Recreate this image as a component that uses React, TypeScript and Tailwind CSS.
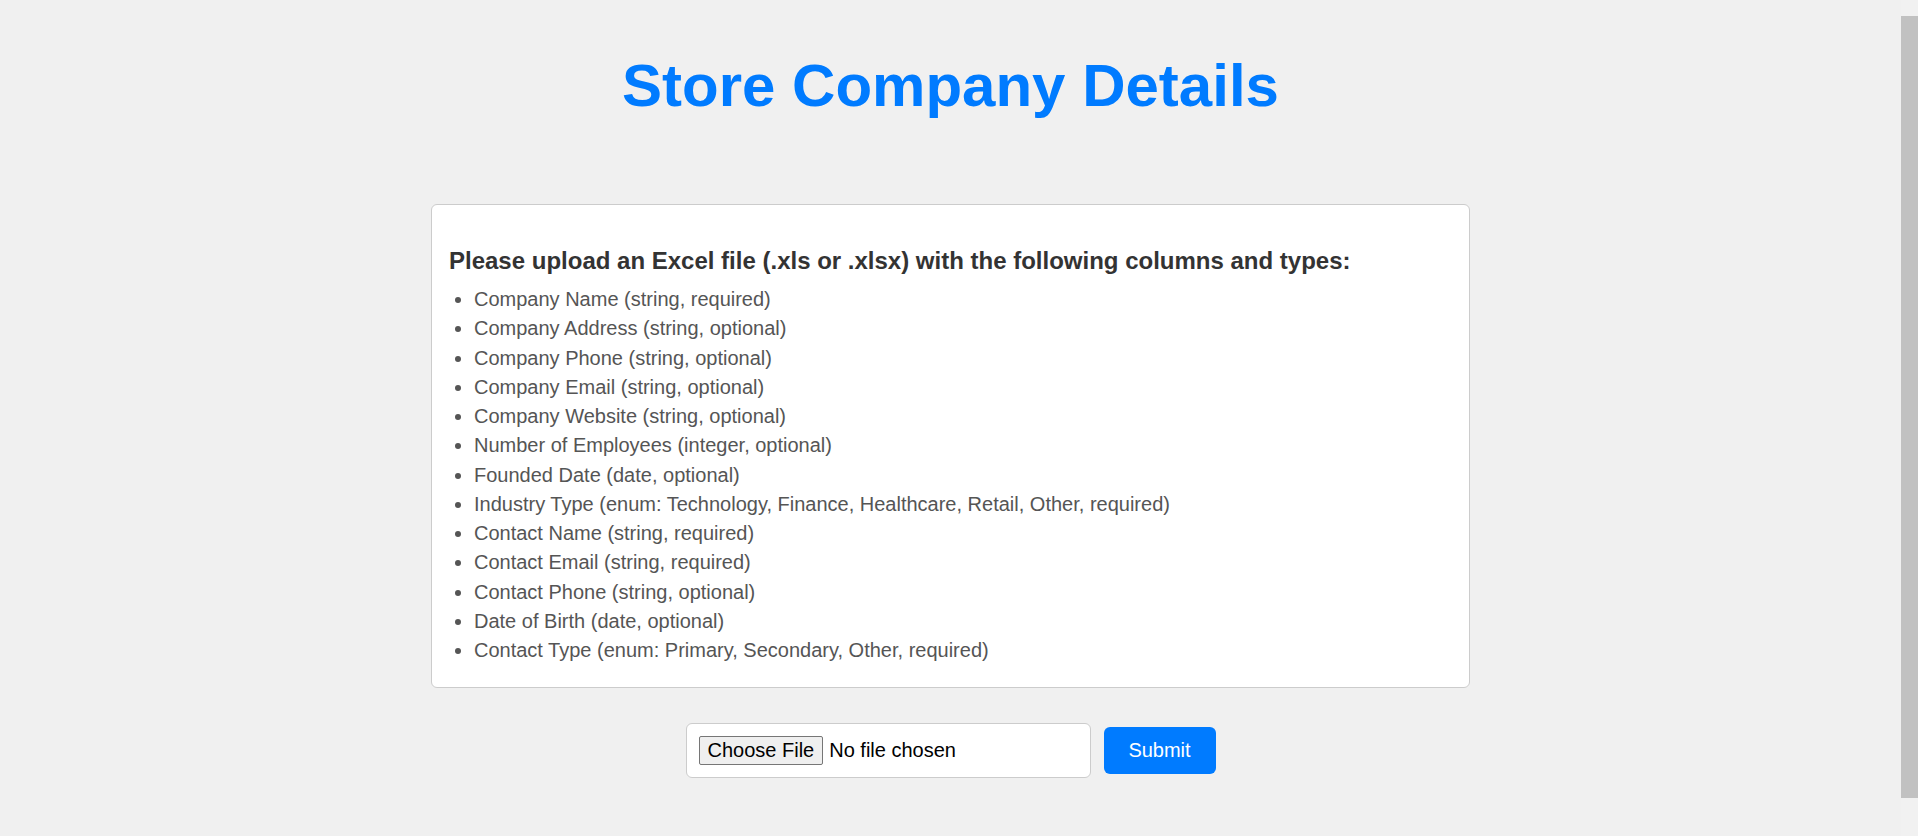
const columns = [
  "Company Name (string, required)",
  "Company Address (string, optional)",
  "Company Phone (string, optional)",
  "Company Email (string, optional)",
  "Company Website (string, optional)",
  "Number of Employees (integer, optional)",
  "Founded Date (date, optional)",
  "Industry Type (enum: Technology, Finance, Healthcare, Retail, Other, required)",
  "Contact Name (string, required)",
  "Contact Email (string, required)",
  "Contact Phone (string, optional)",
  "Date of Birth (date, optional)",
  "Contact Type (enum: Primary, Secondary, Other, required)",
];

export default function App() {
  return (
    <div className="flex h-[836px] overflow-hidden bg-[#f0f0f0] font-['Liberation_Sans',Arial,sans-serif]">
      <main className="flex-1 pt-[51px]">
        <h1 className="text-center text-[60px] font-bold leading-[69px] text-[#007bff]">
          Store Company Details
        </h1>

        <section className="mx-auto mt-[84px] w-[1039px] rounded-[6px] border border-[#cccccc] bg-white px-[17px] pb-[25px] pt-[42px]">
          <h3 className="text-[24px] font-bold leading-[28px] text-[#333333]">
            Please upload an Excel file (.xls or .xlsx) with the following columns and types:
          </h3>
          <ul className="mt-[13px] flex list-disc flex-col gap-[6.25px] pl-[25px] text-[20px] leading-[23px] text-[#555555]">
            {columns.map((col) => (
              <li key={col}>{col}</li>
            ))}
          </ul>
        </section>

        <form className="mt-[35px] flex items-center justify-center gap-[13px]">
          <label className="flex h-[55px] w-[405px] items-center rounded-[6px] border border-[#cccccc] bg-white px-[12px] text-[20px] text-black">
            <span className="flex h-[29px] items-center rounded-[2px] border border-[#767676] bg-[#efefef] px-[8px] leading-[23px]">
              Choose File
            </span>
            <span className="ml-[6px] leading-[23px]">No file chosen</span>
          </label>
          <button
            type="button"
            className="h-[47px] w-[112px] rounded-[6px] bg-[#007bff] text-[20px] leading-[23px] text-white"
          >
            Submit
          </button>
        </form>
      </main>

      {/* page scrollbar */}
      <aside className="w-[17px] shrink-0 bg-[#f1f1f1] pt-[16px]">
        <div className="h-[782px] bg-[#c1c1c1]" />
      </aside>
    </div>
  );
}
